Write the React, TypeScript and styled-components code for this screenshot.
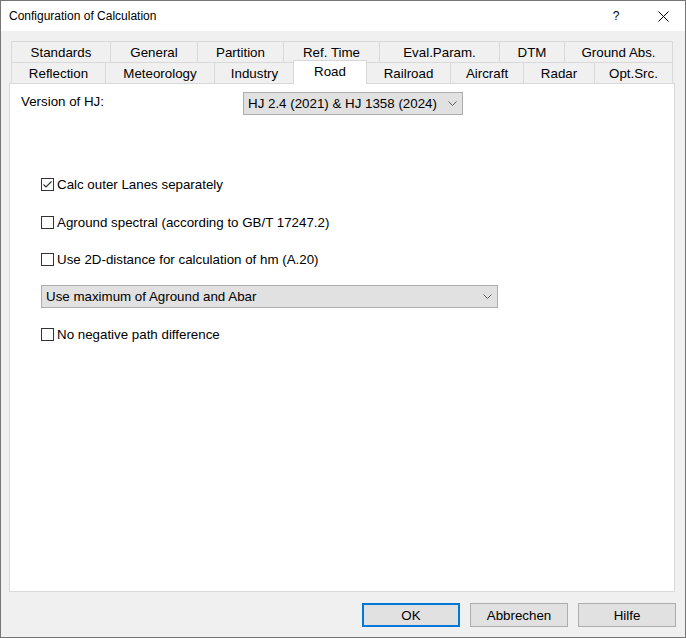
import React from "react";
import styled, { createGlobalStyle } from "styled-components";

const Global = createGlobalStyle`
  html, body { margin: 0; padding: 0; background: #ffffff; }
  body { font-family: "Liberation Sans", Arial, sans-serif; }
`;

const Window = styled.div`
  box-sizing: border-box;
  width: 686px;
  height: 638px;
  border: 1px solid #767676;
  background: #f0f0f0;
  display: flex;
  flex-direction: column;
  font-family: "Liberation Sans", Arial, sans-serif;
  font-size: 13.33px;
  color: #000;
`;

const TitleBar = styled.div`
  flex: none;
  height: 30px;
  background: #ffffff;
  display: flex;
  align-items: center;
`;

const Title = styled.div`
  flex: 1;
  padding-left: 8px;
  font-size: 12px;
`;

const CaptionButton = styled.div<{ $w: number }>`
  width: ${(p) => p.$w}px;
  height: 30px;
  display: flex;
  align-items: center;
  justify-content: center;
  font-size: 12px;
`;

const Body = styled.div`
  flex: 1;
  display: flex;
  flex-direction: column;
  padding: 10px 9px 0 8px;
  min-height: 0;
`;

const TabStrip = styled.div`
  margin: 0 3px 0 2px;
  position: relative;
  z-index: 1;
`;

const TabRow = styled.div`
  display: flex;
  align-items: flex-start;
  height: 21px;
`;

const Tab = styled.div<{ $w: number; $active?: boolean }>`
  box-sizing: border-box;
  flex: none;
  width: ${(p) => p.$w}px;
  height: ${(p) => (p.$active ? 24 : 21)}px;
  margin-left: ${(p) => (p.$active ? -2 : -1)}px;
  margin-top: ${(p) => (p.$active ? -2 : 0)}px;
  padding-bottom: ${(p) => (p.$active ? 2 : 0)}px;
  border: 1px solid #d9d9d9;
  border-bottom: none;
  background: ${(p) => (p.$active ? "#ffffff" : "#f0f0f0")};
  position: relative;
  z-index: ${(p) => (p.$active ? 2 : 1)};
  display: flex;
  align-items: center;
  justify-content: center;
  white-space: nowrap;
  &:first-child {
    margin-left: 0;
  }
`;

const Panel = styled.div`
  flex: 1;
  margin-right: 1px;
  background: #ffffff;
  border: 1px solid #d9d9d9;
  padding: 8px 0 0 11px;
  display: flex;
  flex-direction: column;
`;

const VersionRow = styled.div`
  display: flex;
  align-items: flex-start;
`;

const Label = styled.div`
  width: 222px;
  padding-top: 2px;
  line-height: 16px;
`;

const Options = styled.div`
  display: flex;
  flex-direction: column;
  align-items: flex-start;
  margin-left: 20px;
`;

const Field = styled.div<{ $top: number }>`
  margin-top: ${(p) => p.$top}px;
`;

const CheckRow = styled.label`
  display: flex;
  align-items: center;
  height: 13px;
  line-height: 13px;
  white-space: nowrap;
`;

const Box = styled.span`
  box-sizing: border-box;
  flex: none;
  width: 13px;
  height: 13px;
  border: 1px solid #333333;
  background: #ffffff;
  margin-right: 3px;
  display: flex;
  align-items: center;
  justify-content: center;
`;

const Combo = styled.div<{ $w: number }>`
  box-sizing: border-box;
  width: ${(p) => p.$w}px;
  height: 23px;
  border: 1px solid #adadad;
  background: #e1e1e1;
  display: flex;
  align-items: center;
  justify-content: space-between;
  padding: 0 5px 0 4px;
  white-space: nowrap;
`;

const Footer = styled.div`
  flex: none;
  display: flex;
  justify-content: flex-end;
  gap: 10px;
  padding: 11px 0 10px;
`;

const Button = styled.div<{ $default?: boolean }>`
  box-sizing: border-box;
  width: 98px;
  height: 24px;
  background: #e1e1e1;
  border: ${(p) => (p.$default ? "2px solid #0078d7" : "1px solid #adadad")};
  display: flex;
  align-items: center;
  justify-content: center;
`;

const Chevron = () => (
  <svg width="9" height="5" viewBox="0 0 9 5">
    <polyline points="0.5,0.5 4.5,4.5 8.5,0.5" fill="none" stroke="#606060" strokeWidth="1" />
  </svg>
);

const CloseIcon = () => (
  <svg width="11" height="11" viewBox="0 0 11 11">
    <path d="M0.5 0.5 L10.5 10.5 M10.5 0.5 L0.5 10.5" stroke="#000" strokeWidth="1" />
  </svg>
);

const Check = ({ checked, label }: { checked?: boolean; label: string }) => (
  <CheckRow>
    <Box>
      {checked && (
        <svg width="11" height="11" viewBox="0 0 11 11">
          <polyline points="1.5,5.5 4,8 9.5,2.5" fill="none" stroke="#333" strokeWidth="1.2" />
        </svg>
      )}
    </Box>
    {label}
  </CheckRow>
);

type TabDef = { label: string; w: number; active?: boolean };

const edgesToTabs = (labels: string[], edges: number[], active?: string): TabDef[] =>
  labels.map((label, i) => {
    const isActive = label === active;
    const w = edges[i + 1] - edges[i] + 1 + (isActive ? 1 : 0);
    return { label, w, active: isActive };
  });

const topTabs = edgesToTabs(
  ["Standards", "General", "Partition", "Ref. Time", "Eval.Param.", "DTM", "Ground Abs."],
  [11, 110, 197, 283, 379, 499, 564, 672]
);

const bottomTabs = edgesToTabs(
  ["Reflection", "Meteorology", "Industry", "Road", "Railroad", "Aircraft", "Radar", "Opt.Src."],
  [11, 105, 214, 294, 366, 450, 523, 594, 672],
  "Road"
);

export default function App() {
  return (
    <>
      <Global />
      <Window>
        <TitleBar>
          <Title>Configuration of Calculation</Title>
          <CaptionButton $w={52}>?</CaptionButton>
          <CaptionButton $w={43}>
            <CloseIcon />
          </CaptionButton>
        </TitleBar>
        <Body>
          <TabStrip>
            <TabRow>
              {topTabs.map((t) => (
                <Tab key={t.label} $w={t.w}>
                  {t.label}
                </Tab>
              ))}
            </TabRow>
            <TabRow>
              {bottomTabs.map((t) => (
                <Tab key={t.label} $w={t.w} $active={t.active}>
                  {t.label}
                </Tab>
              ))}
            </TabRow>
          </TabStrip>
          <Panel>
            <VersionRow>
              <Label>Version of HJ:</Label>
              <Combo $w={220}>
                <span>HJ 2.4 (2021) &amp; HJ 1358 (2024)</span>
                <Chevron />
              </Combo>
            </VersionRow>
            <Options>
              <Field $top={63}>
                <Check checked label="Calc outer Lanes separately" />
              </Field>
              <Field $top={25}>
                <Check label="Aground spectral (according to GB/T 17247.2)" />
              </Field>
              <Field $top={24}>
                <Check label="Use 2D-distance for calculation of hm (A.20)" />
              </Field>
              <Field $top={19}>
                <Combo $w={457}>
                  <span>Use maximum of Aground and Abar</span>
                  <Chevron />
                </Combo>
              </Field>
              <Field $top={20}>
                <Check label="No negative path difference" />
              </Field>
            </Options>
          </Panel>
          <Footer>
            <Button $default>OK</Button>
            <Button>Abbrechen</Button>
            <Button>Hilfe</Button>
          </Footer>
        </Body>
      </Window>
    </>
  );
}
